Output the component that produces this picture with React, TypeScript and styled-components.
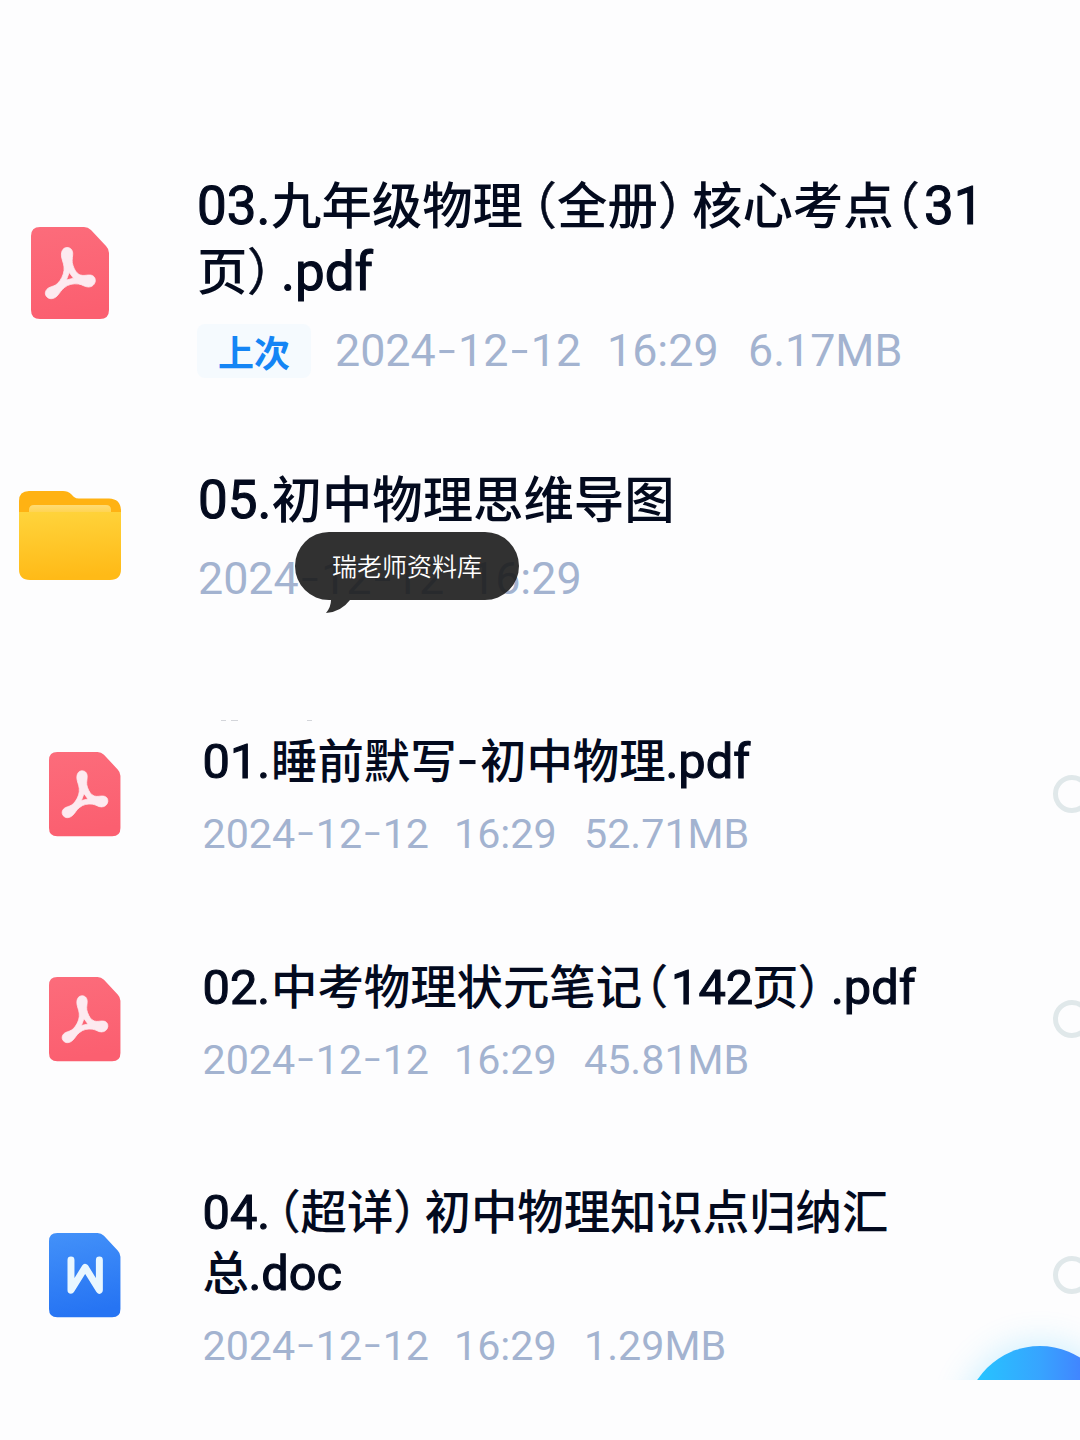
import React from 'react';
import styled, { createGlobalStyle } from 'styled-components';

const Global = createGlobalStyle`
  * { box-sizing: border-box; }
  body { margin: 0; background: #fdfdfe; }
`;

const latin = `Roboto, "Noto Sans CJK SC", sans-serif`;
const cjk = `"Noto Sans CJK SC", sans-serif`;

const Page = styled.main`
  width: 1080px;
  height: 1440px;
  overflow: hidden;
  background: #fdfdfe;
  font-family: ${cjk};
`;

const Group = styled.section<{ $em: number; $top: number; $height: number }>`
  position: relative;
  height: ${(p) => p.$height}px;
  padding-top: ${(p) => p.$top}px;
  font-size: ${(p) => p.$em}px;
  overflow: hidden;
`;

const Row = styled.article<{ $gap: number }>`
  display: flex;
  align-items: center;
  margin-bottom: ${(p) => p.$gap}px;
`;

const IconCell = styled.div<{ $left: number; $width: number; $drop: number }>`
  flex: none;
  display: flex;
  width: ${(p) => p.$width}px;
  padding-left: ${(p) => p.$left}px;
  margin-top: ${(p) => p.$drop}px;
  svg { display: block; overflow: visible; }
`;

const Body = styled.div`
  position: relative;
  flex: 1;
  min-width: 0;
`;

const TitleLine = styled.div<{ $line: number }>`
  display: flex;
  align-items: baseline;
  height: ${(p) => p.$line}px;
  line-height: ${(p) => p.$line}px;
  color: #030a1e;
  white-space: nowrap;
`;

const Segment = styled.span<{ $w?: number; $right?: boolean; $pad?: number }>`
  flex: none;
  display: flex;
  justify-content: ${(p) => (p.$right ? 'flex-end' : 'flex-start')};
  width: ${(p) => (p.$w ? `${p.$w}px` : 'auto')};
  margin-left: ${(p) => p.$pad ?? 0}px;
  font-weight: 500;
`;

const Paren = styled.span`
  font-weight: 400;
  -webkit-text-stroke: 0.5px currentColor;
`;

const Latin = styled.span`
  font-family: ${latin};
  font-size: 1.05em;
  font-weight: 400;
  -webkit-text-stroke: 1.1px currentColor;
`;

const Dash = styled.span`
  font-family: Inter, sans-serif;
  font-size: 1.08em;
  font-weight: 400;
`;

const Meta = styled.div<{ $gap: number; $line: number }>`
  display: flex;
  align-items: center;
  margin-top: ${(p) => p.$gap}px;
  height: ${(p) => p.$line}px;
  line-height: ${(p) => p.$line}px;
  color: #a3b3d0;
  white-space: nowrap;
`;

const MetaPart = styled.span<{ $w: number }>`
  flex: none;
  display: flex;
  align-items: baseline;
  width: ${(p) => p.$w}px;
  font-family: ${latin};
  font-size: 0.889em;
`;

const Hyphen = styled.span`
  margin-top: -2px;
  align-self: flex-start;
  font-family: Inter, sans-serif;
  font-size: 1.1em;
  font-weight: 300;
`;

const Badge = styled.span`
  display: flex;
  align-items: center;
  justify-content: center;
  width: 114px;
  height: 54px;
  margin-right: 24px;
  border-radius: 8px;
  background: #f5fafe;
  color: #1485f5;
  font-size: 36px;
  font-weight: 700;
`;

const Radio = styled.span`
  flex: none;
  width: 38px;
  height: 38px;
  margin-right: -11px;
  border: 5.5px solid #e0e8ea;
  border-radius: 50%;
`;

const Tooltip = styled.div`
  position: absolute;
  left: 97px;
  top: 68px;
  width: 224px;
  height: 81px;
  svg { position: absolute; left: 0; top: 0; }
`;

const TooltipText = styled.span`
  position: relative;
  display: flex;
  justify-content: center;
  height: 68px;
  color: #fff;
  font-size: 25px;
  font-weight: 350;
  line-height: 66px;
  white-space: nowrap;
`;

const Fab = styled.div`
  position: absolute;
  left: 965px;
  top: 626px;
  width: 150px;
  height: 150px;
  border-radius: 50%;
  background: linear-gradient(90deg, #26c4ff 8%, #37a4ff 50%, #4282ff 80%);
  box-shadow: 0 0 32px 4px rgba(60, 200, 255, 0.23);
`;

const Residue = styled.svg`
  position: absolute;
  left: 218px;
  top: 0;
`;

function Sheet({ id, from, to, scale, children }: { id: string; from: string; to: string; scale: number; children: React.ReactNode }) {
  return (
    <svg width={78 * scale} height={92 * scale} viewBox="0 0 78 92">
      <defs>
        <linearGradient id={id} x1="0" y1="0" x2="0.15" y2="1">
          <stop offset="0" stopColor={from} />
          <stop offset="1" stopColor={to} />
        </linearGradient>
      </defs>
      <path
        d="M9 0H53Q57 0 60 3L75 19Q78 22 78 26V83Q78 92 69 92H9Q0 92 0 83V9Q0 0 9 0Z"
        fill={`url(#${id})`}
      />
      {children}
    </svg>
  );
}

function PdfIcon({ id, scale }: { id: string; scale: number }) {
  return (
    <Sheet id={id} from="#fc6c7b" to="#fb5f70" scale={scale}>
      <path
        fillRule="evenodd"
        fill="#fdeaf0"
        stroke="#fdeaf0"
        strokeWidth="0.8"
        d="M36 20.500C40 20.500 42 23.500 41.700 27.500C41.400 32 40.500 34.500 42 38.500C43.500 43 46 47 49.500 48C53 49 54.500 48 58.500 48C62.300 48 64.500 50.500 64.300 53.800C64 57.500 61 60 57.500 60C53.500 60 51.500 57.500 47.500 57C42 56.300 37 57.500 33.500 60.500C30 63 29 66 26 69C22.500 72.500 18 72.500 15.500 69.500C13.200 66.500 14.500 62.500 18 60.700C21 59.200 24 59 26.500 56.500C30 53 32.500 48 33 43.500C33.500 38 31.800 35.500 30.800 31C29.500 25.500 31.500 20.500 36 20.500ZM38.200 45.500L35.400 53L42.500 51.200Z"
      />
    </Sheet>
  );
}

function WordIcon() {
  return (
    <Sheet id="word" from="#4391f9" to="#2674f3" scale={0.916}>
      <path
        d="M24 29.500V62.500L39.500 37.500L55 62.500V29.500"
        fill="none"
        stroke="#e9f7ff"
        strokeWidth="7.600"
        strokeLinecap="round"
        strokeLinejoin="round"
      />
    </Sheet>
  );
}

function FolderIcon() {
  return (
    <svg width="102" height="90" viewBox="0 0 102 90">
      <defs>
        <linearGradient id="front" x1="0" y1="0" x2="0.1" y2="1">
          <stop offset="0" stopColor="#ffd43c" />
          <stop offset="1" stopColor="#ffba17" />
        </linearGradient>
        <linearGradient id="paper" x1="0" y1="0" x2="0" y2="1">
          <stop offset="0" stopColor="#ffdb75" />
          <stop offset="1" stopColor="#ffd24a" />
        </linearGradient>
      </defs>
      <path d="M0 30V11Q0 1 10 1H44Q49 1 52 4L55 7Q57 8.500 60 8.500H90Q102 9 102 21V30Z" fill="#ffb213" />
      <path d="M10 24V20Q10 15 15 15H87Q92 15 92 20V24Z" fill="url(#paper)" />
      <path d="M0 22H102V79Q102 90 91 90H11Q0 90 0 79Z" fill="url(#front)" />
    </svg>
  );
}

type Kind = 'latin' | 'open' | 'close' | 'dash';
type Seg = { t: string; w?: number; pad?: number; kind?: Kind };

function Title({ line, segments }: { line: number; segments: Seg[] }) {
  return (
    <TitleLine $line={line}>
      {segments.map((s, i) => (
        <Segment key={i} $w={s.w} $pad={s.pad} $right={s.kind === 'open'}>
          {s.kind === 'latin' && <Latin>{s.t}</Latin>}
          {s.kind === 'dash' && <Dash>{s.t}</Dash>}
          {(s.kind === 'open' || s.kind === 'close') && <Paren>{s.t}</Paren>}
          {!s.kind && s.t}
        </Segment>
      ))}
    </TitleLine>
  );
}

function Details({ gap, line, widths, size, badge }: { gap: number; line: number; widths: [number, number]; size?: string; badge?: string }) {
  return (
    <Meta $gap={gap} $line={line}>
      {badge && <Badge>{badge}</Badge>}
      <MetaPart $w={widths[0]}>
        <span>2024</span><Hyphen>-</Hyphen><span>12</span><Hyphen>-</Hyphen><span>12</span>
      </MetaPart>
      <MetaPart $w={widths[1]}>16:29</MetaPart>
      {size && <MetaPart $w={160}>{size}</MetaPart>}
    </Meta>
  );
}

export default function App() {
  return (
    <Page>
      <Global />
      <Group $em={50.4} $top={170} $height={720}>
        <Row $gap={86}>
          <IconCell $left={31} $width={197} $drop={-2}><PdfIcon id="pdf3" scale={1} /></IconCell>
          <Body>
            <Title line={66} segments={[
              { t: '03.', w: 74, kind: 'latin' },
              { t: '九年级物理', w: 252 },
              { t: '（', w: 34, kind: 'open' },
              { t: '全册', w: 101 },
              { t: '）', w: 34, kind: 'close' },
              { t: '核心考点', w: 202 },
              { t: '（', w: 26, kind: 'open' },
              { t: '31', pad: 4, kind: 'latin' },
            ]} />
            <Title line={66} segments={[
              { t: '页', w: 50 },
              { t: '）', w: 34, kind: 'close' },
              { t: '.pdf', kind: 'latin' },
            ]} />
            <Details gap={22} line={54} widths={[272, 141]} size="6.17MB" badge="上次" />
          </Body>
        </Row>
        <Row $gap={0}>
          <IconCell $left={19} $width={198} $drop={0}><FolderIcon /></IconCell>
          <Body>
            <Title line={66} segments={[
              { t: '05.', w: 73.5, kind: 'latin' },
              { t: '初中物理思维导图' },
            ]} />
            <Details gap={22} line={54} widths={[272, 141]} />
            <Tooltip>
              <svg width="224" height="81" viewBox="0 0 224 81">
                <path d="M34 0H190A34 34 0 0 1 190 68H55Q46 80 31 81Q36 75 36 68H34A34 34 0 0 1 34 0Z" fill="rgba(27,27,27,0.9)" />
              </svg>
              <TooltipText>瑞老师资料库</TooltipText>
            </Tooltip>
          </Body>
        </Row>
      </Group>

      <Group $em={46.4} $top={8} $height={660}>
        <Residue width="100" height="2" viewBox="0 0 100 2">
          <path d="M3 0.500H8M13 0.500H20M89 0.500H94" stroke="#d3d5da" strokeWidth="1" />
        </Residue>
        <Row $gap={94.5}>
          <IconCell $left={49} $width={202.5} $drop={1}><PdfIcon id="pdf1" scale={0.916} /></IconCell>
          <Body>
            <Title line={60.5} segments={[
              { t: '01.', w: 68.5, kind: 'latin' },
              { t: '睡前默写', w: 185 },
              { t: '-', w: 24, kind: 'dash' },
              { t: '初中物理', w: 185.5 },
              { t: '.pdf', kind: 'latin' },
            ]} />
            <Details gap={20.5} line={50} widths={[251.5, 130]} size="52.71MB" />
          </Body>
          <Radio />
        </Row>
        <Row $gap={94.5}>
          <IconCell $left={49} $width={202.5} $drop={1}><PdfIcon id="pdf2" scale={0.916} /></IconCell>
          <Body>
            <Title line={60.5} segments={[
              { t: '02.', w: 68.5, kind: 'latin' },
              { t: '中考物理状元笔记', w: 371 },
              { t: '（', w: 26, kind: 'open' },
              { t: '142', w: 81, pad: 3, kind: 'latin' },
              { t: '页', w: 46 },
              { t: '）', w: 33, kind: 'close' },
              { t: '.pdf', kind: 'latin' },
            ]} />
            <Details gap={20.5} line={50} widths={[251.5, 130]} size="45.81MB" />
          </Body>
          <Radio />
        </Row>
        <Row $gap={0}>
          <IconCell $left={49} $width={202.5} $drop={0}><WordIcon /></IconCell>
          <Body>
            <Title line={60.5} segments={[
              { t: '04.', w: 67, kind: 'latin' },
              { t: '（', w: 31, kind: 'open' },
              { t: '超详', w: 93 },
              { t: '）', w: 31, kind: 'close' },
              { t: '初中物理知识点归纳汇' },
            ]} />
            <Title line={60.5} segments={[
              { t: '总', w: 46 },
              { t: '.doc', kind: 'latin' },
            ]} />
            <Details gap={20.5} line={50} widths={[251.5, 130]} size="1.29MB" />
          </Body>
          <Radio />
        </Row>
        <Fab />
      </Group>
    </Page>
  );
}
